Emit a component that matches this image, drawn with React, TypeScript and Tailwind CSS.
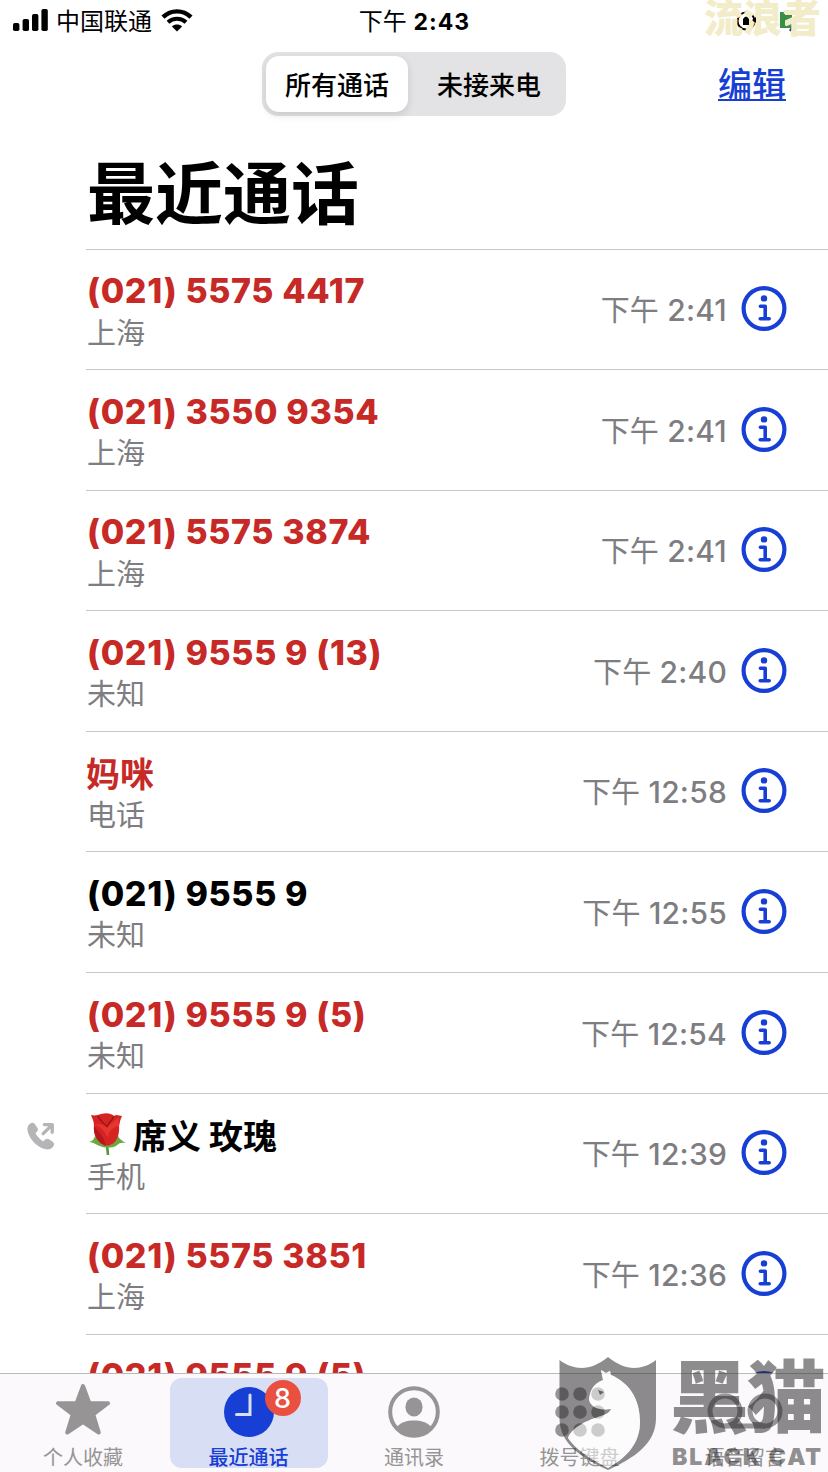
import type { ReactNode } from "react";
import clsx from "clsx";

type Call = {
  name: string;
  place: string;
  time: string;
  missed?: boolean;
  outgoing?: boolean;
  rose?: boolean;
};

const calls: Call[] = [
  { name: "(021) 5575 4417", place: "上海", time: "2:41", missed: true },
  { name: "(021) 3550 9354", place: "上海", time: "2:41", missed: true },
  { name: "(021) 5575 3874", place: "上海", time: "2:41", missed: true },
  { name: "(021) 9555 9 (13)", place: "未知", time: "2:40", missed: true },
  { name: "妈咪", place: "电话", time: "12:58", missed: true },
  { name: "(021) 9555 9", place: "未知", time: "12:55" },
  { name: "(021) 9555 9 (5)", place: "未知", time: "12:54", missed: true },
  { name: "席义 玫瑰", place: "手机", time: "12:39", outgoing: true, rose: true },
  { name: "(021) 5575 3851", place: "上海", time: "12:36", missed: true },
  { name: "(021) 9555 9 (5)", place: "未知", time: "12:35", missed: true },
];

function InfoIcon() {
  return (
    <svg width="46" height="46" viewBox="0 0 46 46" fill="none" className="shrink-0">
      <circle cx="23" cy="22.5" r="20.4" stroke="#173fd6" strokeWidth="4.2" />
      <circle cx="23" cy="12.4" r="3.2" fill="#173fd6" />
      <path d="M19.4 20.3H24.2V32.1M19.2 32.7H28.2" stroke="#173fd6" strokeWidth="3.6" strokeLinecap="round" strokeLinejoin="round" />
    </svg>
  );
}

function OutgoingIcon() {
  return (
    <svg width="28" height="28" viewBox="0 0 28 28" fill="none">
      <path
        d="M4.8 .8C2 1.6 .2 4.4.4 7.6C.9 13.2 5 19.2 9.8 23C14.6 26.8 20.4 28.8 24.2 26.4C26 25.2 27.4 23.2 27 21.6C26.7 20.4 25.6 19.6 22 17.3C20.6 16.4 19.4 16.4 18.2 17.6L17 18.8C16.5 19.3 16 19.3 15.4 18.9C13 17.2 10.4 14.6 8.9 12C8.5 11.4 8.6 11 9.1 10.5L10.1 9.4C11.1 8.3 11.2 7.3 10.4 6.1L8 2.3C7.3 1.1 6.2 .5 4.8 .8Z"
        fill="#b5b5b8"
      />
      <path d="M16.2 11.6L24.6 3.4M17.4 2.6H25.2V10.2" stroke="#b5b5b8" strokeWidth="3.4" strokeLinecap="round" strokeLinejoin="round" />
    </svg>
  );
}

function RoseIcon() {
  return (
    <svg width="38" height="42" viewBox="0 0 38 42" className="-mt-[5px] mr-[6px] ml-[3px] shrink-0">
      <path d="M18 32L19 42" stroke="#4f9a3a" strokeWidth="2.6" />
      <path d="M6 23C5 26 4 28 0 29C5 29 7 32 11 33C15 35 23 35 27 33C30 30 32 29 37 30C32 27 29 25 29 22L22 32H14Z" fill="#6aa840" />
      <path d="M5 13C5 8 3 5 2 2C6 3 9 2 12 1C17 -.5 22 0 25 3C28 1 30 3 33 3C31 7 31 9 30 13C31 22 27 31 20 32.5H16C9 30 4 22 5 13Z" fill="#d42320" />
      <path d="M5 13C8 18 14 21 17 32.5H16C9 30 4 22 5 13Z" fill="#b5171a" />
      <path d="M30 13C24 14 20 18 18.5 25C16 18 12 14 5 11C10 11 14 11 18 14C22 10 26 8 30 4C29 7 31 9 30 13Z" fill="#e5352f" />
      <path d="M9 3C11 8 15 10 18 14M25 3C23 8 20 9 18 14" stroke="#9c1015" strokeWidth="1.2" fill="none" />
    </svg>
  );
}

function StatusBar() {
  return (
    <div className="grid h-10 shrink-0 grid-cols-[1fr_auto_1fr] items-center pr-3 pl-[13px] text-[24px]">
      <div className="flex items-center">
        <svg width="35" height="22" viewBox="0 0 35 22" className="mr-2">
          <rect x="0" y="14" width="6.4" height="8" rx="1.8" />
          <rect x="9.6" y="10" width="6.4" height="12" rx="1.8" />
          <rect x="19" y="5" width="6.4" height="17" rx="1.8" />
          <rect x="28.4" y="0" width="6.4" height="22" rx="1.8" />
        </svg>
        <span className="pt-1 leading-9">中国联通</span>
        <svg width="32" height="23" viewBox="0 0 32 23" fill="none" className="ml-[9px]">
          <path d="M2 8.2C10 .4 22 .4 30 8.2" stroke="#000" strokeWidth="4.4" />
          <path d="M7 13.2C12 8.6 20 8.6 25 13.2" stroke="#000" strokeWidth="4" />
          <path d="M16 22.6L10.9 17.5C13.8 14.9 18.2 14.9 21.1 17.5Z" fill="#000" />
        </svg>
      </div>
      <div className="pt-[3px] leading-9">
        下午 <span className="text-[23px] font-bold tracking-[1px]">2:43</span>
      </div>
      <div />
    </div>
  );
}

function CallRow({ call }: { call: Call }) {
  const isNumber = call.name.startsWith("(");
  return (
    <li className="grid h-[120.6px] shrink-0 grid-cols-[86px_1fr]">
      <div className="pt-[29px] pl-[27px]">{call.outgoing && <OutgoingIcon />}</div>
      <div className="flex border-t border-[#c8c8ca] pr-[41px]">
        <div className="flex-1 pt-[21.5px]">
          <p
            className={clsx(
              "flex h-10 items-center text-[34px] leading-10 whitespace-pre",
              isNumber ? "pl-px font-extrabold tracking-[0.65px]" : "pt-[3px] font-bold",
              call.missed ? "text-[#c62926]" : "text-black",
            )}
          >
            {call.rose && <RoseIcon />}
            {call.name}
          </p>
          <p className="pt-[2.5px] pl-px text-[29px] leading-10 text-[#7d7d82]">{call.place}</p>
        </div>
        <div className="flex h-[119px] items-center gap-[14px] text-[30px] font-medium text-[#7d7d82]">
          <span className="pt-[3px] tracking-[0.2px]">
            <span className="text-[29px] font-normal">下午</span> {call.time}
          </span>
          <InfoIcon />
        </div>
      </div>
    </li>
  );
}

function Tab({ label, active, children }: { label: string; active?: boolean; children: ReactNode }) {
  return (
    <div
      className={clsx(
        "flex h-[90px] w-[158px] flex-col items-center rounded-xl",
        active ? "bg-[#d8def3] font-medium text-[#173fd6]" : "text-[#969495]",
      )}
    >
      <div className="relative flex h-[66px] shrink-0 items-center justify-center">{children}</div>
      <span className="pt-[2px] text-[20px] leading-6">{label}</span>
    </div>
  );
}

function TabBar() {
  return (
    <nav className="flex h-[99px] shrink-0 justify-center gap-[7.5px] border-t border-[#b9b9bb] bg-[#fbf9fb] pt-1">
      <Tab label="个人收藏">
        <svg width="56" height="53" viewBox="0 0 56 53" fill="currentColor" stroke="currentColor" strokeWidth="4" strokeLinejoin="round" className="-mt-[3px]">
          <path d="M28 3L34.4 20.2H53L38.2 31.4L43.8 49.5L28 39L12.2 49.5L17.8 31.4L3 20.2H21.6Z" />
        </svg>
      </Tab>
      <Tab label="最近通话" active>
        <svg width="50" height="50" viewBox="0 0 50 50" fill="none" className="mt-[2px]">
          <circle cx="25" cy="25" r="25" fill="#173fd6" />
          <path d="M26 8V27.5H12.5" stroke="#d8def3" strokeWidth="3" strokeLinecap="round" />
        </svg>
        <span className="absolute top-[2px] left-[41px] flex size-9 items-center justify-center rounded-full bg-[#ea5040] text-[27px] leading-none font-medium text-white">
          8
        </span>
      </Tab>
      <Tab label="通讯录">
        <svg width="52" height="52" viewBox="0 0 52 52" fill="none" className="mt-[2px]">
          <circle cx="26" cy="26" r="23.8" stroke="currentColor" strokeWidth="4" />
          <ellipse cx="26" cy="21" rx="8.6" ry="9.4" fill="currentColor" />
          <path d="M8.5 41C13 36 19 34.4 26 34.4S39 36 43.5 41C39 47 33 50 26 50S13 47 8.5 41Z" fill="currentColor" />
        </svg>
      </Tab>
      <Tab label="拨号键盘">
        <svg width="50" height="50" viewBox="0 0 50 50" fill="currentColor" className="mt-[2px]">
          {[7, 25, 43].map((cy) => [7, 25, 43].map((cx) => <circle key={`${cx}-${cy}`} cx={cx} cy={cy} r="6.8" />))}
        </svg>
      </Tab>
      <Tab label="语音留言">
        <svg width="76" height="36" viewBox="0 0 76 36" fill="none" stroke="currentColor" strokeWidth="5">
          <circle cx="18" cy="18" r="15" />
          <circle cx="58" cy="18" r="15" />
          <path d="M18 33H58" />
        </svg>
      </Tab>
    </nav>
  );
}

function BlackCatMark() {
  return (
    <div className="pointer-events-none absolute right-0 bottom-0 flex h-[116px] w-[270px]">
      <svg width="100" height="116" viewBox="0 0 100 116" className="shrink-0">
        {/* Shield with the cat cut out of it */}
        <path
          fillRule="evenodd"
          d="M1.5 4C18 16 34 14 50 1C66 14 82 16 98 4V62C98 88 76 102 50 114C24 102 1.5 88 1.5 62ZM43 14L48 17L52 15L53 19C72 27 82 44 82 66C82 88 68 102 50 112C34 104 17 93 10 82C14 71 30 64 43 60C49 58 52 56 53 53C45 54 38 53 35 50C33 48 31 46 31 43C32 36 34 28 45 24Z"
          fill="#272526"
          fillOpacity=".52"
        />
        <path
          d="M43 14L48 17L52 15L53 19C72 27 82 44 82 66C82 88 68 102 50 112C34 104 17 93 10 82C14 71 30 64 43 60C49 58 52 56 53 53C45 54 38 53 35 50C33 48 31 46 31 43C32 36 34 28 45 24Z"
          fill="#fff"
          fillOpacity=".52"
        />
        <path d="M40 34L46 36L42 39Z" fill="#666" />
      </svg>
      <div className="ml-[12px] flex flex-col text-[#272526]/52">
        <span className="h-[84px] text-[79px] leading-[84px] font-black tracking-[-2px] whitespace-nowrap">黑猫</span>
        <span className="pt-[3px] pl-[2px] text-[23px] leading-7 font-black tracking-[2px] whitespace-nowrap">BLACK CAT</span>
      </div>
    </div>
  );
}

function CornerMark() {
  return (
    <div className="absolute top-0 right-0 h-10 w-[124px]">
      <svg width="124" height="40" viewBox="0 0 124 40" className="absolute inset-0">
        <circle cx="42" cy="21" r="8.5" fill="none" stroke="#000" strokeWidth="2" />
        <path d="M39 19H45V25H39ZM49 20L53 18V23Z" />
        <rect x="76" y="12" width="12" height="16" fill="#399044" />
        <path d="M86 31L90 23" stroke="#333" strokeWidth="2" />
      </svg>
      <span className="relative block text-[39px] leading-9 font-black whitespace-nowrap text-[#f2ecc8]">流浪者</span>
      <svg width="124" height="40" viewBox="0 0 124 40" className="absolute inset-0">
        <path d="M39 19Q42 14 45 19V25H39ZM48 20L52 17V23Z" />
        <rect x="76" y="14" width="5" height="13" fill="#399044" />
      </svg>
    </div>
  );
}

export default function App() {
  return (
    <div className="relative flex h-[1472px] w-[828px] flex-col overflow-hidden bg-white font-['Inter','Noto_Sans_CJK_SC',sans-serif] text-black">
      <StatusBar />

      {/* Filter and edit */}
      <header className="grid h-[90px] shrink-0 grid-cols-[1fr_auto_1fr] items-start pt-3">
        <div />
        <div className="flex h-16 w-[304px] rounded-2xl bg-[#e3e3e5] p-1 text-[26px] font-medium">
          <div className="flex w-[142px] items-center justify-center rounded-[13px] bg-white pt-[2px] shadow-[0_3px_8px_rgba(0,0,0,0.12)]">
            所有通话
          </div>
          <div className="flex flex-1 items-center justify-center pt-[2px] pl-2">未接来电</div>
        </div>
        <span className="mr-[42px] justify-self-end pt-px text-[34px] leading-[64px] font-medium text-[#173fd6] underline decoration-2 underline-offset-2">
          编辑
        </span>
      </header>

      <h1 className="h-[118.5px] shrink-0 pl-[87px] text-[68px] leading-[128px] font-bold">最近通话</h1>

      <ul className="flex min-h-0 flex-1 flex-col overflow-hidden">
        {calls.map((call, i) => (
          <CallRow key={i} call={call} />
        ))}
      </ul>

      <TabBar />
      <CornerMark />
      <BlackCatMark />
    </div>
  );
}
